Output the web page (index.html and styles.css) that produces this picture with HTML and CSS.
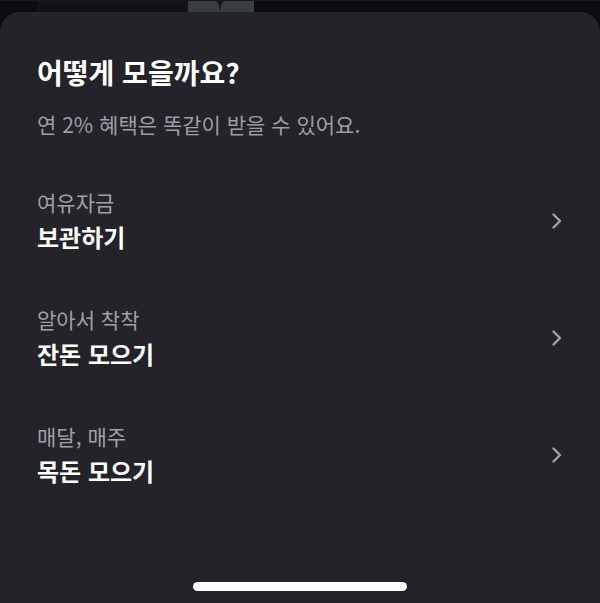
FILE: index.html
```html
<!DOCTYPE html>
<html lang="ko">
<head>
    <meta charset="UTF-8">
    <meta name="viewport" content="width=device-width, initial-scale=1.0">
    <title>어떻게 모을까요?</title>
    <link rel="stylesheet" href="styles.css">
</head>
<body>
    <!-- 시트 뒤에 살짝 보이는 화면 -->
    <div class="backdrop">
        <div class="backdrop-panel"></div>
        <div class="backdrop-block"><span class="backdrop-pin"></span></div>
    </div>

    <div class="sheet">
        <h1 class="sheet-title">어떻게 모을까요?</h1>
        <p class="sheet-desc">연 2% 혜택은 똑같이 받을 수 있어요.</p>

        <ul class="options">
            <li class="option">
                <div class="option-text">
                    <span class="option-label">여유자금</span>
                    <strong class="option-name">보관하기</strong>
                </div>
                <svg class="chevron" width="12" height="18" viewBox="0 0 12 18"><path d="M2.5 2.5 L9 9 L2.5 15.5"/></svg>
            </li>
            <li class="option">
                <div class="option-text">
                    <span class="option-label">알아서 착착</span>
                    <strong class="option-name">잔돈 모으기</strong>
                </div>
                <svg class="chevron" width="12" height="18" viewBox="0 0 12 18"><path d="M2.5 2.5 L9 9 L2.5 15.5"/></svg>
            </li>
            <li class="option">
                <div class="option-text">
                    <span class="option-label">매달, 매주</span>
                    <strong class="option-name">목돈 모으기</strong>
                </div>
                <svg class="chevron" width="12" height="18" viewBox="0 0 12 18"><path d="M2.5 2.5 L9 9 L2.5 15.5"/></svg>
            </li>
        </ul>

        <div class="home-indicator"></div>
    </div>
</body>
</html>
```

FILE: styles.css
```css
*{
    padding: 0;
    margin: 0;
    box-sizing: border-box;
}
html, body{
    height: 100%;
}
body{
    display: flex;
    flex-direction: column;
    background-color: #0b0c0f;
    font-family: "Noto Sans CJK KR", "Noto Sans", sans-serif;
    color: #fff;
    overflow: hidden;
}
.backdrop{
    display: flex;
    height: 12px;
    padding-left: 37px;
    border-top: 1px solid #17181c;
}
.backdrop-panel{
    width: 151px;
    background-color: #111216;
}
.backdrop-block{
    position: relative;
    width: 66px;
    background-color: #3a3e43;
}
.backdrop-pin{
    position: absolute;
    left: 28px;
    top: 0;
    width: 8px;
    height: 10px;
    background-color: #16171b;
    clip-path: polygon(0 0, 100% 0, 62% 40%, 55% 100%, 45% 100%, 38% 40%);
}
.sheet{
    position: relative;
    flex: 1;
    padding: 42px 37px 0;
    background-color: #232329;
    border-radius: 20px 20px 0 0;
}
.sheet-title{
    font-size: 28px;
    font-weight: 700;
    line-height: 36px;
}
.sheet-desc{
    margin-top: 20px;
    font-size: 21px;
    line-height: 28px;
    color: #9e9ea5;
}
.options{
    list-style: none;
    margin-top: 24px;
}
.option{
    display: flex;
    align-items: center;
    justify-content: space-between;
    padding: 26px 0;
}
.option-text{
    display: flex;
    flex-direction: column;
    gap: 5px;
}
.option-label{
    font-size: 21px;
    line-height: 28px;
    color: #a0a0a7;
}
.option-name{
    font-size: 24px;
    font-weight: 700;
    line-height: 32px;
}
.chevron{
    display: block;
}
.chevron path{
    fill: none;
    stroke: #a2a2a8;
    stroke-width: 2.4;
    stroke-linecap: round;
    stroke-linejoin: round;
}
.home-indicator{
    position: absolute;
    left: 50%;
    bottom: 12px;
    width: 214px;
    height: 9px;
    margin-left: -107px;
    border-radius: 5px;
    background-color: #fff;
}
```
